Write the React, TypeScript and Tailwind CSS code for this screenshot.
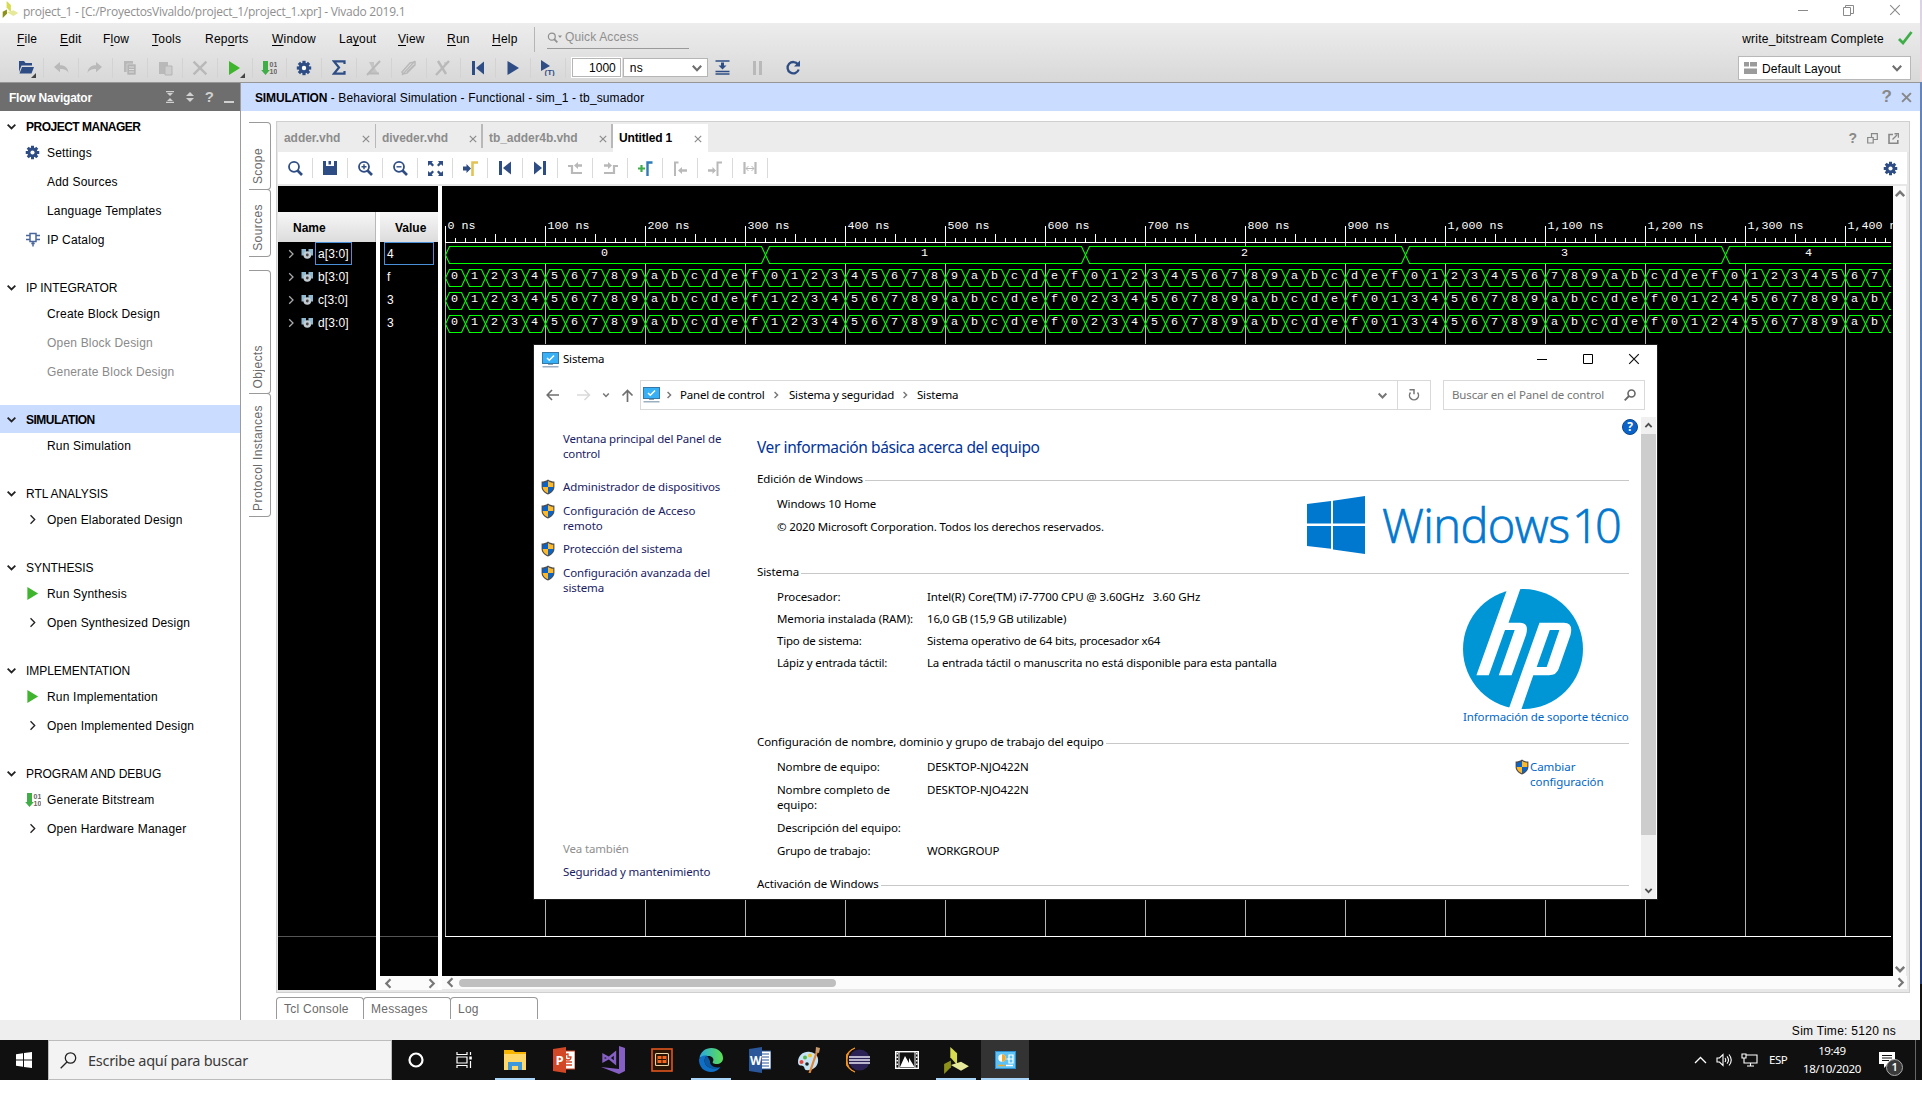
import React from "react";

const navy = "#2f4d85";

/* ---------- small icons ---------- */

function Gear({ size = 16, color = navy }: { size?: number; color?: string }) {
  return (
    <svg width={size} height={size} viewBox="0 0 16 16" className="shrink-0">
      <g fill={color}>
        {[0, 45, 90, 135].map((a) => (
          <rect key={a} x="6.4" y="0.8" width="3.2" height="14.4" transform={`rotate(${a} 8 8)`} />
        ))}
        <path fillRule="evenodd" d="M8 2.6a5.4 5.4 0 1 0 0 10.8a5.4 5.4 0 1 0 0-10.8z" />
      </g>
      <circle cx="8" cy="8" r="2.2" fill="#fff" />
    </svg>
  );
}

function Chevron({ dir, color = "#222", w = 1.6, size = 10 }: { dir: "down" | "right" | "left" | "up"; color?: string; w?: number; size?: number }) {
  const d = {
    down: "M1.5 3.2L5 6.8L8.5 3.2",
    up: "M1.5 6.8L5 3.2L8.5 6.8",
    right: "M3.2 1.2L7 5L3.2 8.8",
    left: "M6.8 1.2L3 5L6.8 8.8",
  }[dir];
  return (
    <svg width={size} height={size} viewBox="0 0 10 10" className="shrink-0">
      <path d={d} fill="none" stroke={color} strokeWidth={w} />
    </svg>
  );
}

function Cross({ size = 10, color = "#8c8c8c", w = 1.4 }: { size?: number; color?: string; w?: number }) {
  return (
    <svg width={size} height={size} viewBox="0 0 10 10" className="shrink-0">
      <path d="M1 1L9 9M9 1L1 9" stroke={color} strokeWidth={w} fill="none" />
    </svg>
  );
}

function Bitstream() {
  return (
    <svg width="16" height="16" viewBox="0 0 16 16" className="shrink-0">
      <path d="M2 1h5v9h1.8L4.5 15L0.2 10H2z" fill="#3fae49" />
      <text x="8.6" y="7" fontSize="7" fontFamily="Liberation Sans" fontWeight="bold" fill="#666">01</text>
      <text x="8.6" y="14" fontSize="7" fontFamily="Liberation Sans" fontWeight="bold" fill="#666">10</text>
    </svg>
  );
}

function Play({ color = "#3eb52c", size = 14 }: { color?: string; size?: number }) {
  return (
    <svg width={size} height={size} viewBox="0 0 14 14" className="shrink-0">
      <path d="M1.5 0L13 7L1.5 14z" fill={color} />
    </svg>
  );
}

function IpCatalog() {
  return (
    <svg width="14" height="15" viewBox="0 0 14 15" className="shrink-0" fill="none" stroke="#4a679c" strokeWidth="1.5">
      <path d="M4 1.5h6v8H4z M0 3.5h4M0 7.5h4M10 3.5h4M10 7.5h4M7 9.5v5M5.3 11.5h3.4" />
    </svg>
  );
}

function XilinxLogo({ size = 18 }: { size?: number }) {
  return (
    <svg width={size} height={size} viewBox="0 0 22 24" className="shrink-0">
      <path d="M5.500 0L11.500 5.500L11.500 16L5.500 9z" fill="#d7db4e" />
      <path d="M6 12L6 18L0 24L0 15z" fill="#8e9117" />
      <path d="M6 16L15 13L22 17L15 21z" fill="#e6e99a" />
    </svg>
  );
}

function Magnifier({ sign, color = navy, size = 16 }: { sign?: "+" | "-"; color?: string; size?: number }) {
  return (
    <svg width={size} height={size} viewBox="0 0 16 16" className="shrink-0" fill="none" stroke={color}>
      <circle cx="7" cy="6.800" r="5" strokeWidth="1.8" />
      <path d="M10.500 10.500L15 15" strokeWidth="2.6" />
      {sign && <path d={sign === "+" ? "M4.500 6.800h5M7 4.300v5" : "M4.500 6.800h5"} strokeWidth="1.4" />}
    </svg>
  );
}

function Shield() {
  return (
    <svg width="14" height="16" viewBox="0 0 14 16" className="shrink-0">
      <path d="M7 0.500C5 2 2.500 2.600 0.600 2.600V8c0 3.500 3 6 6.400 7.500C10.400 14 13.400 11.500 13.400 8V2.600C11.500 2.600 9 2 7 0.500z" fill="#4d4d4d" />
      <path d="M7 1.900C5.500 3 3.500 3.600 1.700 3.700V8H7z" fill="#0a64c8" />
      <path d="M7 1.900C8.500 3 10.500 3.600 12.300 3.700V8H7z" fill="#fdb92c" />
      <path d="M7 14.300C4 13 1.700 10.900 1.700 8H7z" fill="#fdb92c" />
      <path d="M7 14.300C10 13 12.300 10.900 12.300 8H7z" fill="#0a64c8" />
    </svg>
  );
}

function Monitor() {
  return (
    <svg width="17" height="16" viewBox="0 0 17 16" className="shrink-0">
      <rect x="0.500" y="0.500" width="16" height="11" fill="#38b0f5" stroke="#3478a8" />
      <path d="M5 6l2.300 2.300L12 3.500" stroke="#fff" strokeWidth="1.500" fill="none" />
      <rect x="6" y="12" width="5" height="1" fill="#8fa3b4" />
      <rect x="0.500" y="14" width="16" height="1.500" fill="#9db0c2" />
    </svg>
  );
}

function Svg({ children, w = 18, h = 18 }: { children: React.ReactNode; w?: number; h?: number }) {
  return (
    <svg width={w} height={h} viewBox={`0 0 ${w} ${h}`} className="shrink-0">
      {children}
    </svg>
  );
}

const SkipStart = () => (
  <Svg w={14} h={14}><rect x="1" y="0" width="3" height="14" fill={navy} /><path d="M13 0.500v13L5 7z" fill={navy} /></Svg>
);
const SkipEnd = () => (
  <Svg w={14} h={14}><rect x="10" y="0" width="3" height="14" fill={navy} /><path d="M1 0.500v13L9 7z" fill={navy} /></Svg>
);
const g = "#b9b9b9";

/* ---------- top bars ---------- */

const menus: [string, number, string][] = [
  ["File", 0, "w-[43px]"], ["Edit", 0, "w-[43px]"], ["Flow", 1, "w-[49px]"], ["Tools", 0, "w-[53px]"],
  ["Reports", 3, "w-[67px]"], ["Window", 0, "w-[67px]"], ["Layout", 2, "w-[59px]"], ["View", 0, "w-[49px]"],
  ["Run", 0, "w-[45px]"], ["Help", 0, "w-[42px]"],
];

const toolIcons: React.ReactNode[] = [
  <Svg w={20} h={20}><path d="M3 3h5l1.500 2H16v2.500H5.500L3 14z" fill={navy} /><path d="M6 9h12l-2.500 6.500H3.500z" fill={navy} /><path d="M20 20v-5l-5 5z" fill="#444" /></Svg>,
  <Svg w={16} h={14}><path d="M1 6L7 1v3.200c5 0 8 2.500 8.500 7.800C14 9 11.500 8 7 8v3.200z" fill={g} /></Svg>,
  <Svg w={16} h={14}><path d="M15 6L9 1v3.200c-5 0-8 2.500-8.500 7.800C2 9 4.500 8 9 8v3.200z" fill={g} /></Svg>,
  <Svg w={14} h={16}><path d="M1 1h9v11H1z" fill={g} /><path d="M4 4h9v11H4z" fill="#b4b4b4" stroke="#ddd" strokeWidth=".6" /><path d="M6 7h5M6 9.500h5M6 12h5" stroke="#ddd" /></Svg>,
  <Svg w={15} h={16}><path d="M1 2h9v12H1z" fill={g} /><path d="M7 6h7v9H7z" fill="#cecece" stroke="#b5b5b5" /></Svg>,
  <Cross size={16} color={g} w={1.5} />,
  <Svg w={20} h={20}><path d="M4 3L15 10L4 17z" fill="#3eb52c" /><path d="M20 20v-5l-5 5z" fill="#444" /></Svg>,
  <Bitstream />,
  <Gear size={16} />,
  <Svg w={14} h={15}><path d="M12.500 4V1.300H1.800L7 7.500L1.800 13.700H12.500V11" fill="none" stroke={navy} strokeWidth="2.200" /></Svg>,
  <Svg w={16} h={16}><path d="M3 2h5v5l4 6H2l4-5z" fill="#c4c4c4" /><path d="M1 15L14 1M3 13.500h10" stroke={g} strokeWidth="2" /></Svg>,
  <Svg w={16} h={16}><path d="M1 12L9 3l5-1v3L6 13l-4 1z" fill="none" stroke={g} strokeWidth="1.500" /><path d="M1 15L14 1M6 12L13 5" stroke={g} strokeWidth="1.200" /></Svg>,
  <Svg w={16} h={16}><path d="M3 1L11 14M1 15L14 1" stroke={g} strokeWidth="2.400" /><path d="M9 3h4" stroke={g} /></Svg>,
  <SkipStart />,
  <Play color={navy} size={14} />,
  <Svg w={17} h={17}><path d="M2 1L11 7L2 12z" fill={navy} /><text x="5.500" y="15.500" fontSize="8" fontWeight="bold" fontFamily="Liberation Sans" fill={navy}>(T)</text></Svg>,
];

function TopBars() {
  return (
    <>
      <div className="flex h-[23px] items-center bg-white">
        <div className="ml-[2px] -mt-1"><XilinxLogo size={17} /></div>
        <span className="ml-[4px] mt-px font-['Open_Sans','Noto_Sans',sans-serif] text-[12px] leading-none tracking-[-0.26px] text-[#8f8f8f]">
          project_1 - [C:/ProyectosVivaldo/project_1/project_1.xpr] - Vivado 2019.1
        </span>
        <div className="ml-auto flex -mt-[3px] items-center text-[#888]">
          <Svg w={11} h={10}><path d="M0 5.500h10" stroke="#8a8a8a" /></Svg>
          <div className="ml-[34px]"><Svg w={11} h={11}><path d="M.5 2.500h7v8h-7zM2.500 2.500v-2h8v8h-3" fill="none" stroke="#8a8a8a" /></Svg></div>
          <div className="ml-[35px] mr-[19px]"><Cross size={12} color="#8a8a8a" w={0.9} /></div>
        </div>
      </div>
      <div className="flex h-[60px] flex-col border-b border-[#969696] bg-linear-to-b from-[#ededed] to-[#d8d8d8]">
        <div className="flex h-[30px] items-center pl-[17px] text-[12px] tracking-[0.22px]">
          {menus.map(([m, u, w]) => (
            <span key={m} className={`${w} mt-[2px] leading-none`}>
              {m.slice(0, u)}<span className="underline underline-offset-2">{m[u]}</span>{m.slice(u + 1)}
            </span>
          ))}
          <div className="mt-[2px] h-[25px] w-px bg-[#b5b5b5]" />
          <div className="ml-[12px] -mt-[1px] flex h-[23px] w-[142px] items-center border-b border-[#9a9a9a] text-[#8f8f8f]">
            <Magnifier size={11} color="#8f8f8f" />
            <Svg w={5} h={4}><path d="M0 .5h4L2 3z" fill="#8f8f8f" /></Svg>
            <span className="ml-[2px] leading-none tracking-[0.14px]">Quick Access</span>
          </div>
          <span className="ml-auto mt-[2px] leading-none tracking-[0.24px]">write_bitstream Complete</span>
          <div className="ml-[14px] mr-[7px]"><Svg w={15} h={14}><path d="M1 8L5 12L13.500 1" fill="none" stroke="#3fae49" strokeWidth="2.800" /></Svg></div>
        </div>
        <div className="flex h-[29px] items-center pl-[9px] text-[12px]">
          {toolIcons.map((ic, i) => (
            <div key={i} className="flex h-[20px] w-[34.8px] shrink-0 items-center justify-center border-r border-[#d3d3d3]">{ic}</div>
          ))}
          <div className="ml-[6px] flex h-[19px] w-[49px] items-center justify-end border border-[#b5b5b5] bg-white pr-[4px] pt-px outline outline-white">1000</div>
          <div className="ml-[2px] flex h-[19px] w-[85px] items-center border border-[#b5b5b5] bg-white pl-[6px] pr-[4px] pt-px tracking-[0.22px]">
            ns<div className="ml-auto"><Chevron dir="down" color="#6e6e6e" w={1.8} size={12} /></div>
          </div>
          <div className="ml-[7px]"><Svg w={15} h={15}><path d="M.5 1h14M.5 11.500h14M.5 14h14" stroke={navy} strokeWidth="1.500" /><path d="M6 2.500h3v3h2.500L7.500 9.500L3.500 5.500H6z" fill={navy} /></Svg></div>
          <div className="ml-[22px]"><Svg w={11} h={14}><path d="M1 0h3v14H1zM7 0h3v14H7z" fill={g} /></Svg></div>
          <div className="ml-[22px]"><Svg w={16} h={16}><path d="M13 4.500A5.700 5.700 0 1 0 13.700 9.500" fill="none" stroke={navy} strokeWidth="2.300" /><path d="M15 0.500V6.500H9z" fill={navy} /></Svg></div>
          <div className="ml-auto mr-[9px] flex h-[24px] w-[173px] items-center border border-[#b8b8b8] bg-white pl-[5px] pr-[7px] tracking-[0.1px]">
            <Svg w={13} h={12}><path d="M0 0h5v4.500H0zM6 0h7v4.500H6zM0 6.500h13V12H0z" fill="#9b9b9b" /></Svg>
            <span className="ml-[5px] mt-[2px]">Default Layout</span>
            <div className="ml-auto"><Chevron dir="down" color="#6e6e6e" w={1.8} size={12} /></div>
          </div>
        </div>
      </div>
    </>
  );
}

/* ---------- flow navigator ---------- */

type Item = { t: string; icon?: React.ReactNode; off?: boolean };
const exp = <Chevron dir="right" w={1.200} size={11} />;
const groups: { t: string; bold?: boolean; sel?: boolean; items: Item[] }[] = [
  { t: "PROJECT MANAGER", bold: true, items: [{ t: "Settings", icon: <Gear size={15} /> }, { t: "Add Sources" }, { t: "Language Templates" }, { t: "IP Catalog", icon: <IpCatalog /> }] },
  { t: "IP INTEGRATOR", items: [{ t: "Create Block Design" }, { t: "Open Block Design", off: true }, { t: "Generate Block Design", off: true }] },
  { t: "SIMULATION", bold: true, sel: true, items: [{ t: "Run Simulation" }] },
  { t: "RTL ANALYSIS", items: [{ t: "Open Elaborated Design", icon: exp }] },
  { t: "SYNTHESIS", items: [{ t: "Run Synthesis", icon: <Play size={13} /> }, { t: "Open Synthesized Design", icon: exp }] },
  { t: "IMPLEMENTATION", items: [{ t: "Run Implementation", icon: <Play size={13} /> }, { t: "Open Implemented Design", icon: exp }] },
  { t: "PROGRAM AND DEBUG", items: [{ t: "Generate Bitstream", icon: <Bitstream /> }, { t: "Open Hardware Manager", icon: exp }] },
];

function FlowNavigator() {
  return (
    <div className="flex w-[241px] shrink-0 flex-col border-r border-[#9c9c9c] bg-white text-[12px]">
      <div className="flex h-[28px] items-center bg-[#6e6e6e] pl-[9px] font-bold text-white">
        <span className="mt-px tracking-[-0.22px]">Flow Navigator</span>
        <div className="ml-auto flex items-center pr-[6px]">
          <Svg w={10} h={12}><path d="M1 .7h8M1 11.300h8" stroke="#d0d0d0" strokeWidth="1.300" /><path d="M2 2l3 3l3-3zM2 10l3-3l3 3z" fill="#d0d0d0" /></Svg>
          <div className="ml-[10px]"><Svg w={10} h={12}><path d="M1 5l4-4l4 4zM1 7l4 4l4-4z" fill="#d0d0d0" /></Svg></div>
          <span className="ml-[10px] text-[15px] text-[#d0d0d0]">?</span>
          <div className="ml-[10px] mt-[9px] h-[2px] w-[10px] bg-[#d0d0d0]" />
        </div>
      </div>
      <div className="pt-px">
        {groups.map((gr) => (
          <div key={gr.t} className="mb-[19px]">
            <div className={`flex h-[28px] items-center pl-[6px] ${gr.sel ? "bg-[#cadcff]" : ""}`}>
              <Chevron dir="down" w={1.600} size={11} />
              <span className={`ml-[9px] mt-px leading-none ${gr.bold ? "font-bold tracking-[-0.500px]" : "tracking-[-0.050px]"}`}>{gr.t}</span>
            </div>
            <div className="-mt-[2px]">
              {gr.items.map((it) => (
                <div key={it.t} className="flex h-[29px] items-center">
                  <div className="flex w-[47px] items-center justify-center pl-[18px]">{it.icon}</div>
                  <span className={`mt-px leading-none tracking-[0.19px] ${it.off ? "text-[#8a8a8a]" : "text-black"}`}>{it.t}</span>
                </div>
              ))}
            </div>
          </div>
        ))}
      </div>
    </div>
  );
}

/* ---------- waveform ---------- */

const hex = "0123456789abcdef";
const WX = 442;
const END = 1891 - WX;
const X0 = 3.5;

function hexagon(x: number, w: number, top: number) {
  const c = top + 9;
  return `${x},${c} ${x + 4},${top + 0.5} ${x + w - 4},${top + 0.5} ${x + w},${c} ${x + w - 4},${top + 17.5} ${x + 4},${top + 17.5}`;
}

function Waveform() {
  const gridX = Array.from({ length: 15 }, (_, i) => X0 + i * 100);
  const ticks = Array.from({ length: 145 }, (_, i) => i);
  const cells = Array.from({ length: 73 }, (_, i) => i);
  const names = ["0", "100", "200", "300", "400", "500", "600", "700", "800", "900", "1,000", "1,100", "1,200", "1,300", "1,400"];
  return (
    <svg width="1451" height="790" viewBox="0 0 1451 790" className="block bg-black">
      <defs>
        <clipPath id="area"><rect x="0" y="0" width={END} height="790" /></clipPath>
      </defs>
      {gridX.map((x) => (
        <path key={x} d={`M${x} 57V750`} stroke="#b4b4b4" />
      ))}
      <g clipPath="url(#area)" shapeRendering="crispEdges" stroke="#fff">
        {ticks.map((i) => (
          <path key={i} d={`M${X0 + i * 10} ${i % 10 === 0 ? 40 : i % 5 === 0 ? 48 : 52}V57`} />
        ))}
        <path d={`M3 56.500H${END}M3 750.500H${END}`} />
      </g>
      <g fontFamily="Liberation Mono" fontSize="11.670" fill="#fff">
        {names.map((n, i) => (
          <text key={n} x={X0 + i * 100 + 2} y="43" xmlSpace="preserve">{n + " ns"}</text>
        ))}
      </g>
      <g clipPath="url(#area)" stroke="#00ff00" strokeWidth="1.100" fill="#000">
        {[0, 1, 2, 3, 4].map((i) => (
          <polygon key={i} points={hexagon(X0 + i * 320, 320, 60)} />
        ))}
        {[83, 106, 129].map((top) => cells.map((i) => <polygon key={top + "-" + i} points={hexagon(X0 + i * 20, 20, top)} />))}
      </g>
      <g fontFamily="Liberation Mono" fontSize="11.670" fill="#fff" textAnchor="middle">
        {[162.5, 482.5, 802.5, 1122.5, 1366.5].map((x, i) => (
          <text key={x} x={x} y="70">{i}</text>
        ))}
        {[83, 106, 129].map((top, r) =>
          cells.slice(0, 72).map((i) => (
            <text key={r + "-" + i} x={X0 + i * 20 + 9} y={top + 10}>
              {hex[r === 0 ? i % 16 : (i + Math.floor(i / 16)) % 16]}
            </text>
          ))
        )}
      </g>
    </svg>
  );
}

const signals = [["a[3:0]", "4"], ["b[3:0]", "f"], ["c[3:0]", "3"], ["d[3:0]", "3"]];

function BusIcon() {
  return (
    <Svg w={13} h={12}>
      <path d="M0.500 1h4.500v6.500H0.500zM7.500 1h4.500v6.500H7.500z" fill="#8fb9d0" />
      <circle cx="6.300" cy="7" r="3.800" fill="#c3ccd3" />
      <circle cx="6.300" cy="7" r="1.400" fill="#444" />
    </Svg>
  );
}

function SignalTable() {
  return (
    <div className="flex w-[160px] flex-col">
      <div className="h-[26px] bg-black" />
      <div className="flex flex-1 bg-white">
        <div className="flex w-[98px] flex-col bg-black">
          <div className="flex h-[30px] items-center border-r border-[#b8b8b8] bg-linear-to-b from-[#f7f7f7] to-[#dcdcdc] pl-[15px] pt-[2px] font-bold">Name</div>
          <div>
            {signals.map(([n], i) => (
              <div key={n} className="flex h-[23px] items-center pl-[8px] text-white">
                <Chevron dir="right" color="#aaa" w={1.300} size={10} />
                <div className="ml-[5px]"><BusIcon /></div>
                <span className={`ml-px flex h-[23px] items-center border px-[2px] tracking-[0.1px] ${i === 0 ? "border-[#4a90d9]" : "border-transparent"}`}>{n}</span>
              </div>
            ))}
          </div>
          <div className="mt-[602px] h-px bg-[#555]" />
        </div>
        <div className="ml-[4px] flex w-[58px] flex-col bg-black">
          <div className="flex h-[30px] items-center bg-linear-to-b from-[#f7f7f7] to-[#dcdcdc] pl-[15px] pt-[2px] font-bold">Value</div>
          <div className="px-[4px]">
            {signals.map(([n, v], i) => (
              <div key={n} className={`flex h-[23px] items-center border pl-[2px] text-white ${i === 0 ? "border-[#4a90d9]" : "border-transparent"}`}>{v}</div>
            ))}
          </div>
          <div className="mt-[602px] h-px bg-[#555]" />
          <div className="mt-auto flex h-[14px] items-center justify-between bg-[#fbfbfb] pl-[3px] pr-px">
            <Chevron dir="left" color="#777" w={2} size={11} />
            <Chevron dir="right" color="#777" w={2} size={11} />
          </div>
        </div>
      </div>
    </div>
  );
}

const waveTools: React.ReactNode[] = [
  <Magnifier />,
  <Svg w={14} h={14}><path d="M0 0h3v5h8V0h3v14H0zM5.500 0h2.500v3.500H5.500z" fill={navy} /></Svg>,
  <Magnifier sign="+" />,
  <Magnifier sign="-" />,
  <Svg w={15} h={15}><g fill={navy}><path d="M0 0h5L3.700 1.500L6 4L4.500 5.500L2 3.200L0 5zM15 0v5L13 3.200L10.500 5.500L9 4L11.300 1.500L10 0zM0 15v-5l2 1.800L4.500 9.500L6 11L3.700 13.500L5 15zM15 15h-5l1.300-1.500L9 11l1.500-1.500L13 11.800l2-1.800z" /></g></Svg>,
  <Svg w={15} h={15}><path d="M0 5.500h3.500V3L8 7.500L3.500 12V9.500H0z" fill={navy} /><path d="M9.500 15V1.500H15" stroke="#e2c455" strokeWidth="2.600" fill="none" /></Svg>,
  <SkipStart />,
  <SkipEnd />,
  <Svg w={15} h={14}><path d="M0 5h4v7h10" fill="none" stroke={g} strokeWidth="2.200" /><path d="M6 4.500L10 1v2.300h4v2.400h-4V8z" fill={g} /></Svg>,
  <Svg w={15} h={14}><path d="M15 5h-4v7H1" fill="none" stroke={g} strokeWidth="2.200" /><path d="M9 4.500L5 1v2.300H1v2.400h4V8z" fill={g} /></Svg>,
  <Svg w={15} h={15}><path d="M0 7.500h7M3.500 4v7" stroke="#3fae49" strokeWidth="2.200" /><path d="M9.500 15V1.500H14.500" stroke="#2e7bb5" strokeWidth="2.400" fill="none" /></Svg>,
  <Svg w={14} h={15}><path d="M2 15V1.500H5.500" stroke={g} strokeWidth="2" fill="none" /><path d="M5 9.500L9 6v2.200h5v2.600H9V13z" fill={g} /></Svg>,
  <Svg w={14} h={15}><path d="M9.500 15V1.500H14" stroke={g} strokeWidth="2" fill="none" /><path d="M8 9.500L4.500 6v2.200H0v2.600h4.500V13z" fill={g} /></Svg>,
  <Svg w={14} h={14}><path d="M1.500 1v12M12.500 1v12" stroke={g} strokeWidth="2.200" /><path d="M3 7.500h8M5.500 5L3 7.500L5.500 10M8.500 5L11 7.500L8.500 10" stroke={g} fill="none" /></Svg>,
];

const fileTabs: [string, string, boolean][] = [
  ["adder.vhd", "w-[98px] border-r border-[#b8b8b8] pl-[6px] pr-[5px]", false],
  ["diveder.vhd", "w-[107px] border-r-2 border-[#b8b8b8] pl-[6px] pr-[4px]", false],
  ["tb_adder4b.vhd", "w-[130px] border-r-2 border-[#b8b8b8] pl-[6px] pr-[4px]", false],
  ["Untitled 1", "w-[95px] bg-white pl-[6px] pr-[6px]", true],
];

function SideTab({ label, cls }: { label: string; cls: string }) {
  return (
    <div className={`flex w-[22px] items-end justify-center rounded-r-[4px] border-y border-r border-[#9a9a9a] pb-[5px] pr-[4px] ${cls}`}>
      <span className="rotate-180 whitespace-nowrap text-[12px] leading-none tracking-[0.4px] text-[#6a6a6a] [writing-mode:vertical-rl]">{label}</span>
    </div>
  );
}

function WavePanel() {
  return (
    <div className="flex h-[872px] w-[1634px] flex-col border border-[#cfcfcf] bg-[#e7e7e7] pl-px text-[12px]">
      <div className="flex h-[30px] bg-[#ececec] pt-[2px]">
        {fileTabs.map(([t, c, on]) => (
          <div key={t} className={`flex items-center ${c} ${on ? "h-[28px] text-black" : "h-[24px] text-[#8c8c8c]"}`}>
            <span className={`font-bold leading-none ${on ? "-mt-px tracking-[-0.17px]" : "pt-[3px] tracking-[-0.050px]"}`}>{t}</span>
            <div className={on ? "ml-auto mt-[2px]" : "ml-auto mt-[5px]"}><Cross size={8} w={1.500} /></div>
          </div>
        ))}
        <div className="ml-auto flex items-center pr-[10px] text-[#888]">
          <span className="text-[14px] font-bold">?</span>
          <div className="ml-[10px]"><Svg w={11} h={11}><path d="M.7 4.500h5.500v5.500H.7zM4.500 4V.7h5.800v5.800H6.500" fill="none" stroke="#888" strokeWidth="1.200" /></Svg></div>
          <div className="ml-[10px]"><Svg w={11} h={11}><path d="M5 1.500H1v8.700h8.800V7" fill="none" stroke="#888" strokeWidth="1.600" /><path d="M4.500 6.500L9 2M6.500.7h4v4" fill="none" stroke="#888" strokeWidth="1.400" /></Svg></div>
        </div>
      </div>
      <div className="mr-[2px] flex h-[32px] items-center bg-white">
        {waveTools.map((ic, i) => (
          <div key={i} className="flex h-[20px] w-[35px] items-center justify-center border-r border-[#dadada]">{ic}</div>
        ))}
        <div className="ml-auto mr-[9px]"><Gear size={15} /></div>
      </div>
      <div className="mt-[2px] flex h-[804px]">
        <SignalTable />
        <div className="w-[4px] bg-white" />
        <div className="flex w-[1466px] flex-col">
          <div className="flex h-[790px]">
            <Waveform />
            <div className="flex w-[13px] flex-col items-center justify-between bg-[#fbfbfb] pb-px pt-[2px]">
              <Chevron dir="up" color="#777" w={2} size={12} />
              <Chevron dir="down" color="#777" w={2} size={12} />
            </div>
          </div>
          <div className="flex h-[13px] w-[1465px] items-center bg-[#fbfbfb] pl-[3px] pr-px">
            <Chevron dir="left" color="#777" w={2} size={11} />
            <div className="ml-[3px] h-[8px] w-[377px] rounded-full bg-[#bfbfbf]" />
            <div className="ml-auto"><Chevron dir="right" color="#777" w={2} size={11} /></div>
          </div>
        </div>
      </div>
    </div>
  );
}

function Workspace() {
  return (
    <div className="flex flex-1 flex-col bg-white">
      <div className="flex h-[28px] items-center bg-[#cadcff] pl-[14px] pr-[8px] text-[12px]">
        <span className="mt-px tracking-[0.13px]"><b className="tracking-[-0.15px]">SIMULATION</b> - Behavioral Simulation - Functional - sim_1 - tb_sumador</span>
        <span className="ml-auto text-[17px] font-bold text-[#888]">?</span>
        <div className="ml-[9px]"><Cross size={11} w={1.800} color="#888" /></div>
      </div>
      <div className="flex">
        <div className="w-[35px] pl-[8px] pt-[11px]">
          <SideTab label="Scope" cls="h-[68px]" />
          <SideTab label="Sources" cls="-mt-px h-[68px]" />
          <SideTab label="Objects" cls="mt-[13px] h-[124px]" />
          <SideTab label="Protocol Instances" cls="-mt-px h-[124px]" />
        </div>
        <div className="pt-[10px]">
          <WavePanel />
          <div className="mt-[4px] flex text-[12px] tracking-[0.25px] text-[#6a6a6a]">
            {["Tcl Console", "Messages", "Log"].map((t, i) => (
              <div key={t} className={`flex h-[22px] items-center rounded-t-[4px] border-x border-t border-[#9a9a9a] pl-[7px] pt-px ${i ? "-ml-px w-[88px]" : "w-[88px]"}`}>{t}</div>
            ))}
          </div>
        </div>
      </div>
    </div>
  );
}

/* ---------- system window ---------- */

function Heading({ t }: { t: string }) {
  return (
    <div className="flex h-[16px] items-center">
      <span className="whitespace-nowrap tracking-[-0.090px]">{t}</span>
      <div className="ml-[2px] mt-[3px] h-px flex-1 bg-[#c8c8c8]" />
    </div>
  );
}

function Row({ k, v, cls = "h-[22px]" }: { k: string; v?: string; cls?: string }) {
  return (
    <div className={`flex pl-[20px] leading-[15px] ${cls}`}>
      <span className="w-[150px] shrink-0 pr-[20px]">{k}</span>
      <span className="whitespace-pre">{v}</span>
    </div>
  );
}

function HpLogo() {
  return (
    <svg width="120" height="120" viewBox="0 0 120 120" className="block">
      <circle cx="60" cy="60" r="60" fill="#0096d6" />
      <g fill="#fff">
        <path d="M45 -2L13.400 86.300H25.800L42 41H51.700L35.800 86.300H48.600L63 46Q66.500 33.700 57 33.700H45.500L58 -2z" />
        <path fillRule="evenodd" d="M76.500 33.700L45 122H57.800L70.300 86.300H86Q93.500 86.300 95.800 79.500L107.500 46Q110.500 33.700 101 33.700zM86.800 41H96.400L83.700 78H73.700z" />
      </g>
    </svg>
  );
}

function LinkItem({ t, cls }: { t: string; cls: string }) {
  return (
    <div className={`flex leading-[15px] ${cls}`}>
      <div className="mr-[8px] w-[14px]"><Shield /></div>
      <span className="w-[165px]">{t}</span>
    </div>
  );
}

function SystemWindow() {
  return (
    <div className="absolute left-[533px] top-[344px] flex h-[556px] w-[1125px] flex-col border border-[#1c1c1c] bg-white font-['Noto_Sans','Open_Sans',sans-serif] text-[11.500px] tracking-[-0.120px] text-black">
      <div className="flex h-[35px] items-center pb-[5px] pl-[8px]">
        <Monitor />
        <span className="-mt-[2px] ml-[4px] tracking-[-0.200px]">Sistema</span>
        <div className="-mt-[2px] ml-auto flex items-center pr-[17px]">
          <Svg w={11} h={10}><path d="M0 5.500h10" stroke="#000" /></Svg>
          <div className="ml-[35px]"><Svg w={11} h={11}><path d="M.5.500h9v9h-9z" fill="none" stroke="#000" /></Svg></div>
          <div className="ml-[34px]"><Cross size={12} color="#111" w={1} /></div>
        </div>
      </div>
      <div className="flex h-[30px] items-center">
        <div className="ml-[12px]"><Svg w={14} h={12}><path d="M13 6H1.500M6 1L1.200 6L6 11" fill="none" stroke="#6f6f6f" strokeWidth="1.600" /></Svg></div>
        <div className="ml-[17px]"><Svg w={14} h={12}><path d="M0 6h12M7.500 1l5 5l-5 5" fill="none" stroke="#dadada" strokeWidth="1.600" /></Svg></div>
        <div className="ml-[11px]"><Chevron dir="down" color="#777" w={2} size={8} /></div>
        <div className="ml-[11px]"><Svg w={13} h={13}><path d="M6.500 13V1.500M1.500 6.500l5-5l5 5" fill="none" stroke="#6f6f6f" strokeWidth="1.700" /></Svg></div>
        <div className="ml-[6px] flex h-[30px] w-[791px] items-center border border-[#d9d9d9] pl-[2px] tracking-[-0.200px]">
          <Monitor />
          <div className="ml-[5px] w-[15px]"><Chevron dir="right" color="#777" w={1.800} size={8} /></div>
          <span className="w-[92px] whitespace-nowrap">Panel de control</span>
          <div className="w-[17px]"><Chevron dir="right" color="#777" w={1.800} size={8} /></div>
          <span className="w-[112px] whitespace-nowrap">Sistema y seguridad</span>
          <div className="w-[16px]"><Chevron dir="right" color="#777" w={1.800} size={8} /></div>
          <span>Sistema</span>
          <div className="ml-auto mr-[9px]"><Chevron dir="down" color="#777" w={1.800} size={11} /></div>
          <div className="flex h-full w-[33px] items-center justify-center border-l border-[#d9d9d9]">
            <Svg w={12} h={13}><path d="M2.500 3.500A4.500 4.500 0 1 0 9.500 3.500" fill="none" stroke="#777" strokeWidth="1.500" /><path d="M1.500 .8h4.500v4.500" fill="none" stroke="#777" strokeWidth="1.500" /></Svg>
          </div>
        </div>
        <div className="ml-[12px] flex h-[30px] w-[202px] items-center border border-[#d9d9d9] pl-[8px] pr-[8px] tracking-[-0.150px] text-[#757575]">
          Buscar en el Panel de control
          <div className="ml-auto"><Svg w={12} h={12}><circle cx="7.500" cy="4.500" r="3.500" fill="none" stroke="#666" strokeWidth="1.600" /><path d="M5 7L.7 11.300" stroke="#666" strokeWidth="1.800" /></Svg></div>
        </div>
      </div>
      <div className="mt-[7px] flex h-[482px] overflow-hidden">
        <div className="flex w-[223px] flex-col pl-[7px] tracking-[-0.170px] text-[#1a2163]">
          <span className="ml-[22px] mt-[14px] w-[170px] leading-[15px]">Ventana principal del Panel de control</span>
          <LinkItem t="Administrador de dispositivos" cls="mt-[18px] tracking-[-0.120px]" />
          <LinkItem t="Configuración de Acceso remoto" cls="mt-[8px] [&>span]:w-[145px] tracking-[-0.020px]" />
          <LinkItem t="Protección del sistema" cls="mt-[8px] tracking-[-0.100px]" />
          <LinkItem t="Configuración avanzada del sistema" cls="mt-[8px] tracking-[-0.100px]" />
          <span className="ml-[22px] mt-auto leading-[15px] text-[#8f8f8f]">Vea también</span>
          <span className="mb-[20px] ml-[22px] mt-[8px] leading-[15px] tracking-[-0.130px]">Seguridad y mantenimiento</span>
        </div>
        <div className="w-[872px]">
          <div className="flex h-[54px] items-end pb-[13px] text-[15.500px] leading-[22px] tracking-[-0.400px] text-[#003399]">Ver información básica acerca del equipo</div>
          <Heading t="Edición de Windows" />
          <div className="flex h-[77px]">
            <div className="pt-[9px]">
              <Row k="Windows 10 Home" cls="h-[23px]" />
              <div className="whitespace-nowrap pl-[20px] leading-[15px] tracking-[-0.150px]">© 2020 Microsoft Corporation. Todos los derechos reservados.</div>
            </div>
            <div className="ml-auto mr-[9px] mt-[9px] flex h-[58px] items-center text-[#0078d0]">
              <svg width="58" height="58" viewBox="0 0 58 58" className="block" fill="currentColor">
                <path d="M0 8L24 5V27.500H0zM26 4.700L58 0V27.500H26zM0 30H24V52.800L0 50zM26 30H58V58L26 53.500z" />
              </svg>
              <span className="ml-[17px] w-[238px] whitespace-nowrap font-['Open_Sans','Noto_Sans',sans-serif] text-[47px] font-light leading-none tracking-[-0.600px] [-webkit-text-stroke:0.700px_#0078d0] [word-spacing:-9px]">
                Windows <span className="tracking-[-4px]">10</span>
              </span>
            </div>
          </div>
          <Heading t="Sistema" />
          <div className="flex h-[154px]">
            <div className="pt-[9px]">
              <Row k="Procesador:" v="Intel(R) Core(TM) i7-7700 CPU @ 3.60GHz   3.60 GHz" cls="h-[22px] tracking-[-0.080px]" />
              <Row k="Memoria instalada (RAM):" v="16,0 GB (15,9 GB utilizable)" cls="h-[22px] [&>span]:pr-0 [&>span+span]:tracking-[-0.200px]" />
              <Row k="Tipo de sistema:" v="Sistema operativo de 64 bits, procesador x64" cls="h-[22px] tracking-[-0.200px]" />
              <Row k="Lápiz y entrada táctil:" v="La entrada táctil o manuscrita no está disponible para esta pantalla" cls="h-[22px] tracking-[-0.180px]" />
            </div>
            <div className="ml-auto w-[166px] pt-[9px]">
              <HpLogo />
              <div className="whitespace-nowrap leading-[16px] tracking-[-0.130px] text-[#0066cc]">Información de soporte técnico</div>
            </div>
          </div>
          <Heading t="Configuración de nombre, dominio y grupo de trabajo del equipo" />
          <div className="flex h-[126px]">
            <div className="pt-[9px]">
              <Row k="Nombre de equipo:" v="DESKTOP-NJO422N" cls="h-[23px]" />
              <Row k="Nombre completo de equipo:" v="DESKTOP-NJO422N" cls="h-[38px]" />
              <Row k="Descripción del equipo:" cls="h-[23px] [&>span]:pr-0" />
              <Row k="Grupo de trabajo:" v="WORKGROUP" cls="h-[23px]" />
            </div>
            <div className="ml-auto flex w-[114px] pt-[9px] leading-[15px] tracking-[-0.050px] text-[#0066cc]">
              <Shield /><span className="ml-px w-[80px]">Cambiar configuración</span>
            </div>
          </div>
          <Heading t="Activación de Windows" />
        </div>
        <div className="w-[12px] pt-[2px]">
          <div className="-ml-[7px] flex h-[16px] w-[16px] items-center justify-center rounded-full border border-[#0b4a8c] bg-[#0a63c9] text-[12px] font-bold leading-none text-white">?</div>
        </div>
        <div className="flex w-[15px] flex-col items-center bg-[#f0f0f0]">
          <div className="flex h-[17px] items-center"><Chevron dir="up" color="#505050" w={2} size={9} /></div>
          <div className="h-[401px] w-[15px] bg-[#cdcdcd]" />
          <div className="mt-auto flex h-[17px] items-center"><Chevron dir="down" color="#505050" w={2} size={9} /></div>
        </div>
      </div>
    </div>
  );
}

/* ---------- taskbar ---------- */

const apps: { icon: React.ReactNode; bar?: string; on?: boolean }[] = [
  { bar: "w-[40px]", icon: <Svg w={22} h={22}><path d="M0 1h9l2 2h11v18H0z" fill="#f8b500" /><path d="M0 5h22v16H0z" fill="#ffd869" /><path d="M4 21v-8h14v8h-4v-4H8v4z" fill="#3c97dd" /></Svg> },
  { icon: <Svg w={22} h={26}><path d="M10 4h12v18H10z" fill="#fff" stroke="#d24726" /><path d="M15 7a3 3 0 1 0 3 3h-3zM13 15h6M13 18h6" stroke="#d24726" fill="none" strokeWidth="1.300" /><path d="M0 2L13 0V26L0 24z" fill="#d24726" /><text x="2.500" y="18" fontSize="13" fontWeight="bold" fontFamily="Open Sans" fill="#fff">P</text></Svg> },
  { icon: <Svg w={24} h={28}><path d="M18 0L24 2V25L18 28L0 21L18 23z" fill="#865fc5" /><path d="M2.500 9v6L8 12L14 17V7L8 12z" fill="none" stroke="#865fc5" strokeWidth="2.400" /></Svg> },
  { icon: <Svg w={22} h={24}><rect x="1" y="1" width="20" height="22" fill="#2a1505" stroke="#e0561f" strokeWidth="1.600" /><rect x="4.500" y="5.500" width="13" height="12" fill="#2a1505" stroke="#e8d3a8" strokeWidth="1.100" rx="1" /><path d="M6.500 8h4v7h-4zM11.500 8h4v7h-4z" fill="#f4661c" /><path d="M7 11.500h8" stroke="#2a1505" /></Svg> },
  { bar: "w-[40px]", icon: <Svg w={24} h={24}><defs><linearGradient id="eg" x1="0" x2="1"><stop offset="0" stopColor="#28a9e0" /><stop offset="1" stopColor="#5ee052" /></linearGradient></defs><path d="M.5 10C1.500 4 6 0 12.500 0C19 0 24 4.500 24 10c0 4-3 6-6.500 6c-3 0-4.500-1-3.500-2.500c1.500-3-1-5.500-4.500-5.500C5 8 1 9.500.5 10z" fill="url(#eg)" /><path d="M0 12c0-3 4-5 8-4.500c-3 2-3.500 8 .5 11c4 2.800 9.500 2 13 .5C19 22.500 16 24 12 24C5 24 0 19 0 12z" fill="#0f6fc5" /><path d="M8 7.500c-3 2-3.500 8 .5 11c4 2.800 9.500 2 13 .5c-5 1.500-11-1-10.500-6z" fill="#0c59a4" /></Svg> },
  { icon: <Svg w={22} h={26}><path d="M10 4h12v18H10z" fill="#fff" stroke="#2b579a" /><path d="M13 7h7M13 10h7M13 13h7M13 16h7M13 19h7" stroke="#2b579a" /><path d="M0 2L13 0V26L0 24z" fill="#2b579a" /><text x="1" y="17.500" fontSize="12" fontWeight="bold" fontFamily="Open Sans" fill="#fff">W</text></Svg> },
  { icon: <Svg w={24} h={26}><path d="M1 15C1 8 7 4 13 5c5 .5 9 4 8 10c-1 6-7 9-12 8c-2-.5-1-3-3-4c-2-.5-5 0-5-4z" fill="#c5e3f5" /><circle cx="4.500" cy="15" r="2" fill="#e5433a" /><circle cx="8" cy="10.500" r="2" fill="#53b848" /><circle cx="13" cy="8.500" r="2" fill="#f2c430" /><circle cx="10" cy="17" r="1.800" fill="#222" /><path d="M20.500 3L12.500 26" stroke="#e08634" strokeWidth="2.200" /><path d="M18.500 5l.5-5l4 1l-1 5z" fill="#c9996a" /></Svg> },
  { icon: <Svg w={24} h={26}><path d="M9 1A13 13 0 0 0 9 25A16 13 0 0 1 9 1z" fill="#f7941e" stroke="#f7941e" /><circle cx="13.500" cy="13" r="10.500" fill="#2c2255" /><path d="M3 10h21M3 13h21M3 16h21" stroke="#e9e6f4" strokeWidth="1.700" /></Svg> },
  { icon: <Svg w={24} h={18}><rect x=".7" y=".7" width="22.600" height="16.600" fill="#111" stroke="#fff" strokeWidth="1.400" /><path d="M4 1v16M20 1v16" stroke="#fff" /><path d="M2.200 2v14M21.800 2v14" stroke="#fff" strokeWidth="1.500" strokeDasharray="1.500 2" /><path d="M5 16L10 5L14 12L14 7L19.500 16z" fill="#fff" /></Svg> },
  { bar: "w-[40px]", icon: <XilinxLogo size={27} /> },
  { bar: "w-[48px]", on: true, icon: <Svg w={21} h={18}><rect x=".5" y=".5" width="20" height="17" fill="#5cc2f5" stroke="#2e8fd0" /><circle cx="7" cy="7" r="3.700" fill="#fff" /><path d="M7 3.300A3.700 3.700 0 0 1 7 10.700V7z" fill="#f0a92c" /><path d="M14 4h4v8h-4zM11.500 8h2.500" stroke="#fff" strokeWidth="1.200" fill="none" /><path d="M14 8h4" stroke="#fff" /><path d="M3 14.500h7" stroke="#f0a92c" strokeWidth="1.500" /><path d="M11 14.500h7" stroke="#fff" strokeWidth="1.500" /></Svg> },
];

function Taskbar() {
  return (
    <div className="flex h-[40px] w-[1922px] bg-[#101010] font-['Noto_Sans','Open_Sans',sans-serif]">
      <div className="flex w-[48px] items-center justify-center">
        <Svg w={16} h={16}><path d="M0 2.200L7 1.200V7.500H0zM8 1L16 0V7.500H8zM0 8.500H7V14.800L0 13.800zM8 8.500H16V16L8 15z" fill="#fff" /></Svg>
      </div>
      <div className="flex w-[344px] items-center border border-[#bcbcbc] bg-[#f3f3f3] pl-[11px]">
        <Svg w={17} h={17}><circle cx="10.500" cy="6" r="5.200" fill="none" stroke="#222" strokeWidth="1.300" /><path d="M7 10L.7 16.300" stroke="#222" strokeWidth="1.300" /></Svg>
        <span className="ml-[11px] mt-px text-[14.500px] tracking-[-0.280px] text-[#3a3a3a]">Escribe aquí para buscar</span>
      </div>
      <div className="flex w-[48px] items-center justify-center"><Svg w={16} h={16}><circle cx="8" cy="8" r="6.500" fill="none" stroke="#fff" strokeWidth="2.200" /></Svg></div>
      <div className="mr-px flex w-[50px] items-center justify-center pr-[2px]">
        <Svg w={16} h={16}><path d="M1 0v2.500h10V0M1 16v-2.500h10V16M1 5h10v6H1zM14.500 0v3M14.500 9v7" fill="none" stroke="#fff" strokeWidth="1.200" /><rect x="13.300" y="4.500" width="2.500" height="3" fill="#fff" /></Svg>
      </div>
      {apps.map((a, i) => (
        <div key={i} className={`mr-px flex w-[48px] flex-col items-center ${a.on ? "bg-[#333]" : ""}`}>
          <div className="flex h-[38px] items-center pt-[2px]">{a.icon}</div>
          {a.bar && <div className={`h-[2px] bg-[#a9d6f8] ${a.bar}`} />}
        </div>
      ))}
      <div className="ml-auto flex items-center pr-[6px] text-[12px] tracking-[-0.200px] text-white">
        <Svg w={13} h={8}><path d="M1 7L6.500 1.500L12 7" fill="none" stroke="#fff" strokeWidth="1.300" /></Svg>
        <div className="ml-[9px]"><Svg w={17} h={14}><path d="M1 5h2.500L7 1.500v11L3.500 9H1zM9 5q1.500 2 0 4M11 3.300q3 3.700 0 7.400M13 1.500q4.500 5.500 0 11" fill="none" stroke="#fff" strokeWidth="1.100" /></Svg></div>
        <div className="ml-[8px]"><Svg w={17} h={14}><path d="M5 2h11v8H3V7M9.500 10v3M6 13h7M1 1h4v4H1zM3 5v3" fill="none" stroke="#fff" strokeWidth="1.100" /></Svg></div>
        <span className="ml-[11px] w-[18px] text-[11.500px] tracking-[-0.500px]">ESP</span>
        <div className="ml-[15px] w-[60px] text-center text-[11.500px] leading-[18px] tracking-[-0.330px]"><div>19:49</div><div>18/10/2020</div></div>
        <div className="relative ml-[17px] mr-[20px]">
          <Svg w={16} h={16}><path d="M0 0h16v12H9l-4 4v-4H0z" fill="#fff" /><path d="M3 3.500h10M3 6h10M3 8.500h7" stroke="#101010" /></Svg>
          <span className="absolute left-[7px] top-[7px] flex h-[17px] w-[17px] items-center justify-center rounded-full border border-[#aaa] bg-[#3a3a3a] text-[11px] font-semibold">1</span>
        </div>
        <div className="h-[40px] w-px bg-[#666]" />
      </div>
    </div>
  );
}

export default function App() {
  return (
    <div className="relative h-[1098px] w-[1922px] overflow-hidden bg-white font-['Liberation_Sans',Arial,sans-serif] text-black">
      <div className="flex h-[1040px]">
        <div className="flex w-[1920px] flex-col">
          <TopBars />
          <div className="flex h-[937px]">
            <FlowNavigator />
            <Workspace />
          </div>
          <div className="flex h-[20px] items-center justify-end bg-[#eee] pr-[24px] pt-[2px] text-[12px] tracking-[0.280px]">Sim Time: 5120 ns</div>
        </div>
        <div className="flex w-[2px] flex-col">
          <div className="h-[82px] bg-linear-to-b from-[#d8d3e6] to-[#ecd9dd]" />
          <div className="h-[902px] bg-linear-to-b from-[#6685bd] via-[#3a6bb0] to-[#233c78]" />
          <div className="flex-1 bg-[#111]" />
        </div>
      </div>
      <Taskbar />
      <SystemWindow />
    </div>
  );
}
